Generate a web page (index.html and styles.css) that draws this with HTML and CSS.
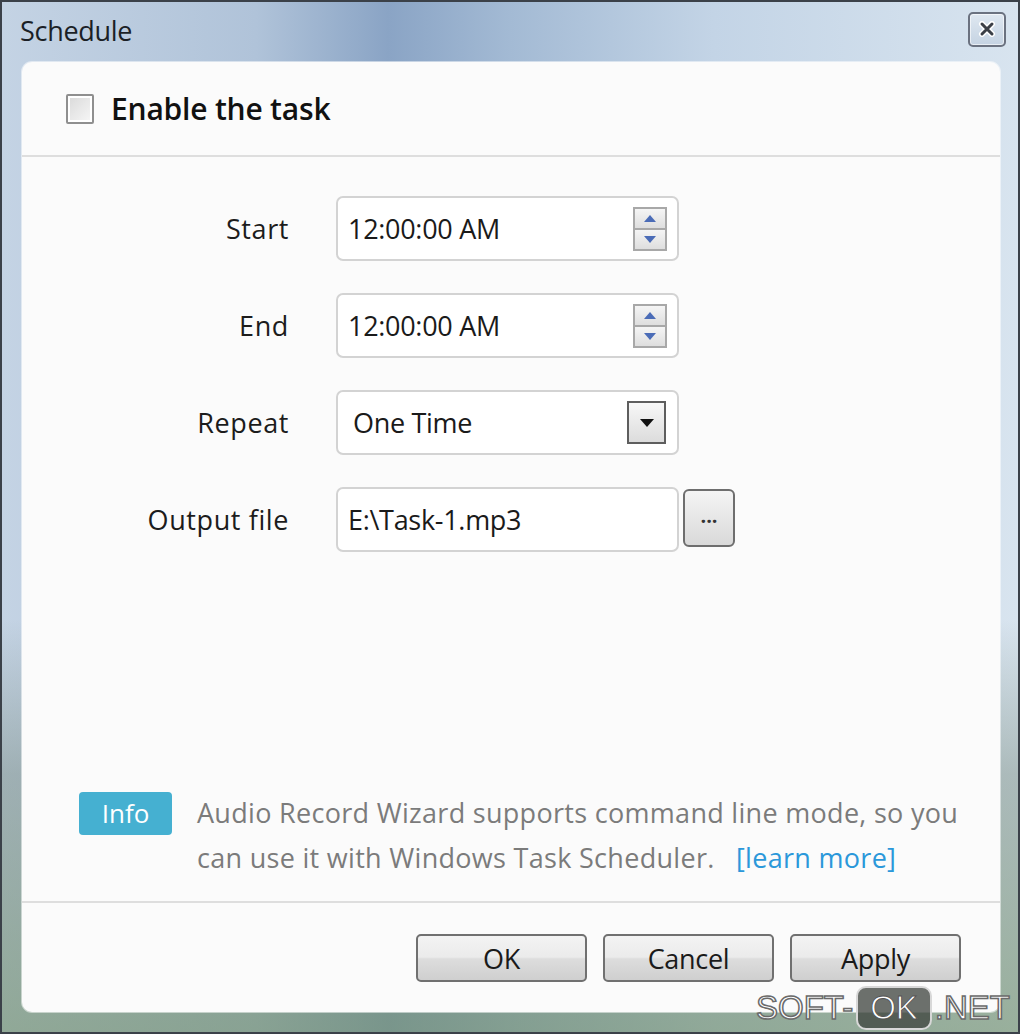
FILE: index.html
```html
<!DOCTYPE html>
<html lang="en">
<head>
  <meta charset="UTF-8">
  <title>Schedule</title>
  <link rel="stylesheet" href="styles.css">
</head>
<body>
  <div class="window">
    <div class="titlebar">
      <span class="title">Schedule</span>
      <button class="close-button" aria-label="Close">
        <svg width="18" height="16" viewBox="0 0 18 16">
          <path d="M4 3 L14 13 M14 3 L4 13" stroke="#fff" stroke-width="6" stroke-linecap="round"/>
          <path d="M4 3 L14 13 M14 3 L4 13" stroke="#3b3f46" stroke-width="3" stroke-linecap="round"/>
        </svg>
      </button>
    </div>

    <div class="panel">
      <div class="panel-header">
        <span class="checkbox"></span>
        <span class="enable-label">Enable the task</span>
      </div>

      <div class="panel-body">
        <div class="form-row">
          <label class="field-label">Start</label>
          <div class="field">
            <span class="field-value">12:00:00 AM</span>
            <span class="spin">
              <span class="spin-half"><svg width="12" height="7" viewBox="0 0 12 7"><path d="M6 0 L12 7 L0 7 Z" fill="#4b6cb7"/></svg></span>
              <span class="spin-half"><svg width="12" height="7" viewBox="0 0 12 7"><path d="M0 0 L12 0 L6 7 Z" fill="#4b6cb7"/></svg></span>
            </span>
          </div>
        </div>

        <div class="form-row">
          <label class="field-label">End</label>
          <div class="field">
            <span class="field-value">12:00:00 AM</span>
            <span class="spin">
              <span class="spin-half"><svg width="12" height="7" viewBox="0 0 12 7"><path d="M6 0 L12 7 L0 7 Z" fill="#4b6cb7"/></svg></span>
              <span class="spin-half"><svg width="12" height="7" viewBox="0 0 12 7"><path d="M0 0 L12 0 L6 7 Z" fill="#4b6cb7"/></svg></span>
            </span>
          </div>
        </div>

        <div class="form-row">
          <label class="field-label">Repeat</label>
          <div class="field select">
            <span class="field-value">One Time</span>
            <span class="drop-button"><svg width="14" height="8" viewBox="0 0 14 8"><path d="M0 0 L14 0 L7 8 Z" fill="#111"/></svg></span>
          </div>
        </div>

        <div class="form-row">
          <label class="field-label">Output file</label>
          <div class="field">
            <span class="field-value">E:\Task-1.mp3</span>
          </div>
          <button class="browse-button">...</button>
        </div>

        <div class="info">
          <span class="info-badge">Info</span>
          <p class="info-text">Audio Record Wizard supports command line mode, so you<br>can use it with Windows Task Scheduler. <a href="#" class="learn-more">[learn more]</a></p>
        </div>
      </div>

      <div class="panel-footer">
        <button class="dialog-button">OK</button>
        <button class="dialog-button">Cancel</button>
        <button class="dialog-button">Apply</button>
      </div>
    </div>

    <div class="watermark">
      <span class="wm-text">SOFT-</span><span class="wm-ok">OK</span><span class="wm-text">.NET</span>
    </div>
  </div>
</body>
</html>
```

FILE: styles.css
```css
body {
  margin: 0;
  padding: 0;
  font-family: 'Open Sans', 'Noto Sans', sans-serif;
  background: #2f353d;
}
.window {
  position: relative;
  width: 1020px;
  height: 1034px;
  box-sizing: border-box;
  border: 2px solid #3b4149;
  display: flex;
  flex-direction: column;
  background:
    linear-gradient(180deg, rgba(255,255,255,0) 0%, rgba(255,255,255,0) 60%, rgba(90,110,90,0.35) 75%, rgba(110,140,100,0.6) 100%),
    linear-gradient(90deg, #c4d3e4 0%, #b0c3d9 25%, #8aa4c5 38%, #a3bad4 50%, #c3d4e6 70%, #d8e4ef 100%);
  overflow: hidden;
}
.titlebar {
  height: 60px;
  display: flex;
  align-items: center;
  justify-content: space-between;
  padding: 0 12px 0 18px;
}
.title {
  font-size: 27px;
  color: #1b1f26;
  letter-spacing: -0.3px;
  margin-top: -4px;
}
.close-button {
  width: 38px;
  height: 35px;
  margin-top: -6px;
  border: 2px solid #6b7280;
  border-radius: 5px;
  background: linear-gradient(#dfe8f1, #c5d3e2);
  display: flex;
  align-items: center;
  justify-content: center;
  padding: 0;
  box-shadow: inset 0 0 0 1px rgba(255,255,255,0.6);
}
.panel {
  flex: 1;
  margin: 0 18px 20px 20px;
  background: #fbfbfb;
  border-radius: 10px;
  display: flex;
  flex-direction: column;
  box-shadow: 0 0 0 1px rgba(255,255,255,0.5);
}
.panel-header {
  height: 93px;
  display: flex;
  align-items: center;
  padding-left: 44px;
  border-bottom: 2px solid #dedede;
}
.checkbox {
  width: 24px;
  height: 26px;
  border: 2px solid #8f8f8f;
  border-radius: 2px;
  background: linear-gradient(135deg, #d9d9d9, #f7f7f7);
  box-shadow: inset 0 0 0 2px #fff;
  margin-right: 17px;
}
.enable-label {
  font-size: 30px;
  font-weight: 600;
  color: #111;
  letter-spacing: -0.2px;
}
.panel-body {
  flex: 1;
  display: flex;
  flex-direction: column;
  padding-top: 39px;
}
.form-row {
  display: flex;
  align-items: center;
  margin-bottom: 32px;
}
.field-label {
  width: 267px;
  margin-right: 47px;
  text-align: right;
  font-size: 27px;
  color: #1c1c1c;
  letter-spacing: 0.6px;
}
.field {
  width: 343px;
  height: 65px;
  box-sizing: border-box;
  border: 2px solid #d3d3d3;
  border-radius: 7px;
  background: #fff;
  display: flex;
  align-items: center;
  justify-content: space-between;
  padding: 0 10px 0 10px;
}
.field.select {
  padding-left: 15px;
}
.field-value {
  font-size: 27px;
  color: #1a1a1a;
  letter-spacing: -0.3px;
}
.spin {
  width: 34px;
  height: 44px;
  box-sizing: border-box;
  border: 2px solid #a8a8a8;
  display: flex;
  flex-direction: column;
}
.spin-half {
  flex: 1;
  display: flex;
  align-items: center;
  justify-content: center;
  background: linear-gradient(#f5f5f5, #dedede);
}
.spin-half + .spin-half {
  border-top: 2px solid #a8a8a8;
}
.drop-button {
  width: 39px;
  height: 43px;
  box-sizing: border-box;
  border: 2px solid #5e5e5e;
  background: linear-gradient(#f7f7f7, #dcdcdc);
  display: flex;
  align-items: center;
  justify-content: center;
  margin-right: 1px;
}
.browse-button {
  width: 52px;
  height: 58px;
  margin-left: 4px;
  margin-top: -3px;
  border: 2px solid #6e6e6e;
  border-radius: 6px;
  background: linear-gradient(#f4f4f4, #d9d9d9);
  font-family: 'Open Sans', sans-serif;
  font-size: 20px;
  font-weight: 700;
  color: #333;
  padding: 0 0 6px;
}
.info {
  margin-top: auto;
  margin-bottom: 21px;
  display: flex;
  align-items: flex-start;
  padding-left: 57px;
}
.info-badge {
  width: 93px;
  height: 43px;
  flex-shrink: 0;
  margin-top: 2px;
  background: #45b0d1;
  border-radius: 4px;
  color: #fff;
  font-size: 26px;
  text-align: center;
  line-height: 43px;
  margin-right: 25px;
}
.info-text {
  margin: 0;
  font-size: 27px;
  line-height: 45px;
  color: #7b7b7b;
  letter-spacing: 0.3px;
  white-space: nowrap;
}
.learn-more {
  margin-left: 14px;
  color: #2b98da;
  text-decoration: none;
}
.panel-footer {
  border-top: 2px solid #dedede;
  display: flex;
  justify-content: flex-end;
  gap: 16px;
  padding: 31px 39px 30px 0;
}
.dialog-button {
  width: 171px;
  height: 48px;
  border: 2px solid #707070;
  border-radius: 5px;
  background: linear-gradient(#f3f3f3 0%, #ebebeb 48%, #dddddd 52%, #cfcfcf 100%);
  font-family: 'Open Sans', sans-serif;
  font-size: 27px;
  color: #1a1a1a;
  padding: 0;
  letter-spacing: -0.3px;
}
.watermark {
  position: absolute;
  right: 8px;
  bottom: 2px;
  display: flex;
  align-items: center;
  font-family: 'Liberation Sans', Arial, sans-serif;
  font-size: 33px;
}
.wm-text {
  color: #fff;
  -webkit-text-stroke: 1.5px #6a6a6a;
}
.wm-ok {
  color: #fff;
  background: rgba(60,66,60,0.75);
  border: 2px solid #d8d8d8;
  border-radius: 10px;
  padding: 0 12px;
  margin: 0 3px;
  line-height: 40px;
  -webkit-text-stroke: 1px #555;
}
```
